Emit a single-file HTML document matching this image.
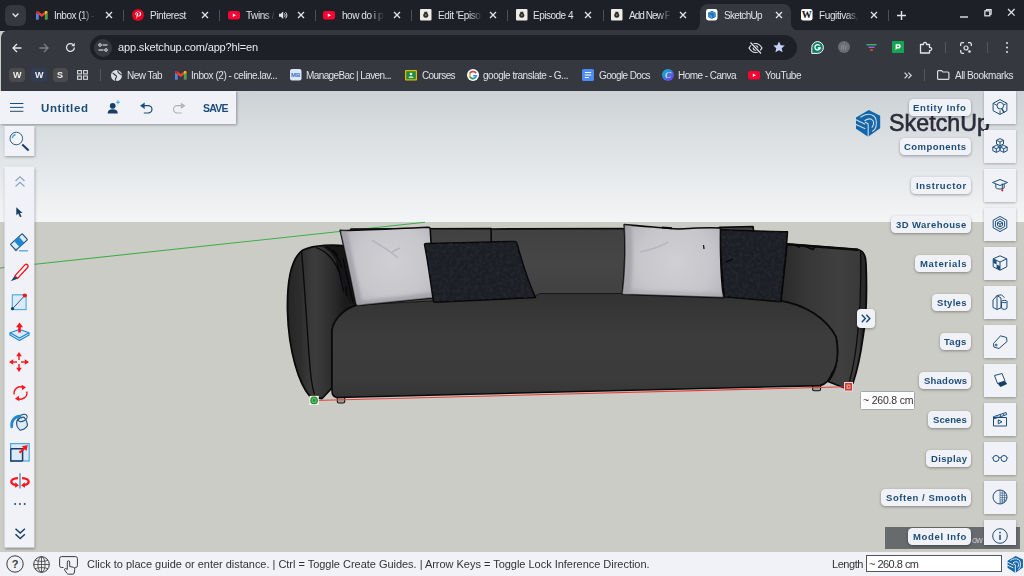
<!DOCTYPE html>
<html><head><meta charset="utf-8">
<style>
*{box-sizing:border-box;margin:0;padding:0}
html,body{width:1024px;height:576px;overflow:hidden;background:#cbccc6;font-family:"Liberation Sans",sans-serif;}
.abs{position:absolute}
#root{position:relative;width:1024px;height:576px;overflow:hidden}
.t{position:absolute;white-space:pre;font-family:"Liberation Sans",sans-serif;will-change:transform}
svg{position:absolute;overflow:visible}
#tabstrip{left:0;top:0;width:1024px;height:31px;background:#1e2028}
#toolbar{left:1px;top:30px;width:1023px;height:61px;background:#363840;border-radius:8px 0 0 0}
#omni{left:90px;top:34.5px;width:707px;height:25.5px;border-radius:13px;background:#1e2028}
#acttab{left:700px;top:4.300px;width:91px;height:27px;background:#363840;border-radius:8px 8px 0 0}
.tsep{position:absolute;top:9.5px;width:1px;height:11px;background:#4d4f58}
.fav{position:absolute;top:9.5px;width:11.5px;height:11.5px}
#sky{left:0;top:90.5px;width:1024px;height:132px;background:linear-gradient(#ccd2d5 0%,#dde1e3 40%,#f4f5f7 100%)}
#ground{left:0;top:222px;width:1024px;height:326px;background:#cbccc6}
.panel{position:absolute;background:#f1f2f7;box-shadow:.5px 1px 2.5px rgba(0,0,0,.32)}
.lbl{position:absolute;height:16px;border-radius:4.5px;background:#f1f2f7;box-shadow:0 1px 3px rgba(0,0,0,.35)}
.ibox{position:absolute;left:983.7px;width:32.8px;height:33px;background:#f1f2f7;box-shadow:0 1px 2.5px rgba(0,0,0,.28)}
#status{left:0;top:548px;width:1024px;height:28px;background:#f1f2f7}
</style></head><body><div id="root">
<div class="abs" id="sky"></div>
<div class="abs" id="ground"></div>
<svg class="abs" id="scene" style="left:0;top:90px" width="1024" height="458" viewBox="0 90 1024 458">
<defs>
<linearGradient id="gSeat" x1="0" y1="293" x2="0" y2="396" gradientUnits="userSpaceOnUse">
<stop offset="0" stop-color="#323232"/><stop offset=".2" stop-color="#373737"/><stop offset=".42" stop-color="#3c3c3c"/><stop offset=".85" stop-color="#3b3b3b"/><stop offset="1" stop-color="#353535"/>
</linearGradient>
<linearGradient id="gBack" x1="0" y1="228" x2="0" y2="300" gradientUnits="userSpaceOnUse">
<stop offset="0" stop-color="#414141"/><stop offset=".5" stop-color="#464646"/><stop offset="1" stop-color="#404040"/>
</linearGradient>
<linearGradient id="gArmL" x1="287" y1="0" x2="345" y2="0" gradientUnits="userSpaceOnUse">
<stop offset="0" stop-color="#252525"/><stop offset=".25" stop-color="#2e2e2e"/><stop offset=".34" stop-color="#353535"/><stop offset=".46" stop-color="#3c3c3c"/><stop offset=".62" stop-color="#363636"/><stop offset=".8" stop-color="#2b2b2b"/><stop offset="1" stop-color="#1b1b1b"/>
</linearGradient>
<linearGradient id="gArmR" x1="786" y1="0" x2="867" y2="0" gradientUnits="userSpaceOnUse">
<stop offset="0" stop-color="#2c2c2c"/><stop offset=".25" stop-color="#373737"/><stop offset=".65" stop-color="#3f3f3f"/><stop offset=".9" stop-color="#3a3a3a"/><stop offset=".93" stop-color="#2b2b2b"/><stop offset="1" stop-color="#262626"/>
</linearGradient>
<radialGradient id="gPW" cx="392" cy="262" r="60" gradientUnits="userSpaceOnUse"><stop offset="0" stop-color="#cfcfd4"/><stop offset=".6" stop-color="#c6c6cb"/><stop offset="1" stop-color="#b3b3b9"/></radialGradient>
<radialGradient id="gPW2" cx="675" cy="262" r="62" gradientUnits="userSpaceOnUse"><stop offset="0" stop-color="#cfcfd4"/><stop offset=".6" stop-color="#c6c6cb"/><stop offset="1" stop-color="#b3b3b9"/></radialGradient>
<filter id="bl" x="-20%" y="-20%" width="140%" height="140%"><feGaussianBlur stdDeviation="1.6"/></filter><filter id="bl2" x="-20%" y="-20%" width="140%" height="140%"><feGaussianBlur stdDeviation=".7"/></filter>
<clipPath id="cpL"><path d="M340.200 230.400 C355 230.800 385 229 428.800 227.200 Q430.200 227.300 430.200 229 C431.500 250 433.200 280 435.200 297.500 L358 305.400 Q356.400 305.400 356 303.500 C352 285 346 255 340.200 230.400 Z"/></clipPath><clipPath id="cpR"><path d="M624.200 224.600 C650 226.500 670 229 680 229 C695 228 710 227.500 719.800 228 Q720.500 228.200 720.500 230 C720.300 250 721 280 723.600 297.600 L622.300 294.200 C625 270 625.500 245 624.200 224.600Z"/></clipPath>
<filter id="noise" x="0" y="0" width="100%" height="100%" color-interpolation-filters="sRGB"><feTurbulence type="fractalNoise" baseFrequency=".28" numOctaves="3" seed="4" result="n"/><feColorMatrix in="n" type="matrix" values="0 0 0 0 .20  0 0 0 0 .22  0 0 0 0 .27  0 0 0 .9 -.33" result="c"/><feComposite in="c" in2="SourceGraphic" operator="in"/></filter>
</defs>
<!-- axis -->
<line x1="0" y1="268" x2="425" y2="222.3" stroke="#3fae49" stroke-width="1.1"/>
<!-- back cushions -->
<path d="M345 246 L351 229 L491 228.5 L491.5 229 L622 228.5 L625 229.500 L716 229.500 L720 227.300 L753 226.500 L754 234 L782 302 L357 306 Z" fill="url(#gBack)" stroke="#0a0a0a" stroke-width="1.700" stroke-linejoin="round"/>
<path d="M491 228.5 L491.3 243" stroke="#0a0a0a" stroke-width="1.6"/>
<!-- left arm -->
<path d="M310 396.500 C299 384 288.500 352 287.500 310 C287 280 291 258 303 250 C315 244.500 335 244.500 345 246 L357 305 C345 308 335 318 332 330 L332 388 L322 398.500 Z" fill="url(#gArmL)" stroke="#0a0a0a" stroke-width="1.800" stroke-linejoin="round"/>
<path d="M301.500 250.500 C305 290 307 330 309.500 361 C310.500 376 312.500 388 314.400 394.500" fill="none" stroke="#0a0a0a" stroke-width="1.3"/>
<path d="M322 246.500 C330 250 336 258 339 268 C343 282 346 294 350 303 L357 305 L345 246 Z" fill="#121212" filter="url(#bl2)"/>
<path d="M316 247.500 C326 251 334 259 339 272 M326 246.500 C334 251 339 258 342 268 M333 250 L338 256 M337 262 C340 275 342 285 344 292 M346 286 L346.500 296 M343 258 C346 272 349 286 353 302" fill="none" stroke="#070707" stroke-width="1.300"/>
<!-- right arm -->
<path d="M787 244 L858 249.5 C864 251 866 256 866 264 C867 290 866 320 863 337 C861 352 858 368 853 383 L846 388.500 L828 381.500 C838 370 839 350 836 337 C826 318 805 305 781 301 Z" fill="url(#gArmR)" stroke="#0a0a0a" stroke-width="1.800" stroke-linejoin="round"/>
<path d="M860.500 251 C861.500 280 860 310 858 330 C856.500 348 854 365 849.500 381.500" fill="none" stroke="#0a0a0a" stroke-width="1.2"/>
<path d="M787 244.300 L858 249.800" fill="none" stroke="#0a0a0a" stroke-width="2.200"/><path d="M803 245.500 L813 249.500 L815 246.500 M796 245.500 L800 247.500" fill="none" stroke="#0a0a0a" stroke-width="1.500"/>
<!-- legs -->
<rect x="337.300" y="395" width="7.400" height="8" rx="1.500" fill="#9d9e9a" stroke="#111" stroke-width="1.100"/>
<rect x="812.600" y="383" width="8" height="7.800" rx="1.500" fill="#9d9e9a" stroke="#111" stroke-width="1.100"/>
<!-- seat -->
<path d="M332 330 C334 318 345 309 357 305 L433 301 L535 296 L540 293.500 L622 293.500 L723 296.500 L781 301 C805 305 826 318 836 337 C838.500 350 838 366 832 373 C830 379 826 384.400 820 385.600 L337 397.500 C333.500 397 332 395 332 391 Z" fill="url(#gSeat)"/>
<path d="M357 305 L433 301 L535 296 L540 293.500 L622 293.500 L723 296.500 L781 301" fill="none" stroke="#1a1a1a" stroke-width="1"/>
<path d="M357 305 C345 309 334 318 332 330 L332 391 C332 395 333.500 397 337 397.500 L820 385.600 C826 384.400 830 379 832 373 C838 366 838.500 350 836 337 C826 318 805 305 781 301" fill="none" stroke="#0a0a0a" stroke-width="1.600" stroke-linejoin="round"/>
<!-- pillows -->
<path d="M340.200 230.400 C355 230.800 385 229 428.800 227.200 Q430.200 227.300 430.200 229 C431.500 250 433.200 280 435.200 297.500 L358 305.400 Q356.400 305.400 356 303.500 C352 285 346 255 340.200 230.400 Z" fill="url(#gPW)" stroke="#0a0a0a" stroke-width="1.600" stroke-linejoin="round"/>
<g clip-path="url(#cpL)"><path d="M339 230 C346 257 351 284 355 306 L363 305 C358 284 352 255 347 230 Z" fill="#9a9aa0" opacity=".7" filter="url(#bl)"/>
<path d="M372 240 C380 246 390 250 398 258 M392 252 L400 248" fill="none" stroke="#b6b6bc" stroke-width="1.600" filter="url(#bl2)"/>
<path d="M357 306.500 L436 299 L436 292 C410 295 385 298 356 301 Z" fill="#9a9aa0" opacity=".7" filter="url(#bl)"/></g>
<path d="M424.500 244.300 Q425 243.400 427 243.500 C455 243 490 242 514.500 241.400 Q516.300 241.400 516.800 243 C522 262 528 282 535.600 297.500 L435 302.200 Q433.500 302.200 433.300 300.500 C431 285 428 262 424.500 244.300Z" fill="#1c1e23" stroke="#070707" stroke-width="1.500" stroke-linejoin="round"/>
<path d="M719.200 229.600 C740 231 765 231 787.500 231.700 C786 255 783 280 780.500 301.800 L724.300 296.800 C722 275 720.500 250 719.200 229.600Z" fill="#1c1e23" stroke="#070707" stroke-width="1.500" stroke-linejoin="round"/>
<path d="M424.500 244.300 Q425 243.400 427 243.500 C455 243 490 242 514.500 241.400 Q516.300 241.400 516.800 243 C522 262 528 282 535.600 297.500 L435 302.200 Q433.500 302.200 433.300 300.500 C431 285 428 262 424.500 244.300Z" fill="#000" filter="url(#noise)"/><path d="M719.200 229.600 C740 231 765 231 787.500 231.700 C786 255 783 280 780.500 301.800 L724.300 296.800 C722 275 720.500 250 719.200 229.600Z" fill="#000" filter="url(#noise)"/>
<path d="M726 262 L733 259" stroke="#050505" stroke-width="1.300"/>
<path d="M624.200 224.600 C650 226.500 670 229 680 229 C695 228 710 227.500 719.800 228 Q720.500 228.200 720.500 230 C720.300 250 721 280 723.600 297.600 L622.300 294.200 C625 270 625.500 245 624.200 224.600Z" fill="url(#gPW2)" stroke="#0a0a0a" stroke-width="1.600" stroke-linejoin="round"/>
<g clip-path="url(#cpR)"><path d="M623 224 C625 250 625 272 621 295 L630 295 C633 270 633 248 631 225 Z" fill="#9a9aa0" opacity=".65" filter="url(#bl)"/><path d="M622 296 L724 299.500 L724 293 L622 289.500Z" fill="#a0a0a6" opacity=".5" filter="url(#bl)"/>
<path d="M640 252 C650 250 660 247 668 242" fill="none" stroke="#b8b8be" stroke-width="1.600" filter="url(#bl2)"/></g>
<path d="M703.500 245 L704 249" stroke="#111" stroke-width="1.300"/><path d="M662 227.600 L672 228.300" stroke="#0a0a0a" stroke-width="2"/>
<!-- guide -->
<line x1="314" y1="400.500" x2="846" y2="386.800" stroke="#e8403c" stroke-width="1.100"/>
<rect x="309.400" y="395.900" width="9.400" height="9" fill="#f4f6f4"/>
<circle cx="314.100" cy="400.400" r="3.200" fill="#55c463" stroke="#2c8a38" stroke-width="1.300"/><circle cx="314.100" cy="400.400" r="1.300" fill="#2c8a38"/>
<rect x="844" y="382" width="9" height="9.500" fill="#ecd6d3"/>
<rect x="845" y="383" width="7" height="7.500" fill="#c0403d"/>
<rect x="846.500" y="384.500" width="4" height="4.500" fill="#ef8f7f"/><rect x="848" y="386" width="1.500" height="1.500" fill="#c0403d"/>
</svg>
<div class="abs" id="tabstrip"></div>
<div class="abs" id="toolbar"></div>
<div class="abs" id="omni"></div>
<div class="abs" id="acttab"></div>
<div class="abs" style="left:4.5px;top:4.5px;width:21px;height:21px;border-radius:6px;background:#363840"></div>
<svg style="left:11.5px;top:13px" width="7" height="4.5" viewBox="0 0 7 4.5"><path d="M.6.6L3.500 3.500L6.400.6" fill="none" stroke="#e3e5ea" stroke-width="1.4"/></svg>
<svg style="left:36.3px;top:11px" width="11.5" height="8.5" viewBox="0 0 11.5 8.5"><path d="M0 1.2V8.5H2.6V3.6L5.75 6L8.9 3.6V8.5H11.5V1.2C11.5 0 10.2-.4 9.3.3L5.75 3L2.2.3C1.3-.4 0 0 0 1.2Z" fill="#ea4335"/><path d="M0 1.2V8.5H2.6V3.6L0 1.6Z" fill="#4285f4"/><path d="M11.5 1.2V8.5H8.9V3.6L11.5 1.6Z" fill="#34a853"/><path d="M8.9 3.6V.6L9.3.3C10.2-.4 11.5 0 11.5 1.2V1.6Z" fill="#fbbc04"/><path d="M2.6 3.6V.6L2.2.3C1.3-.4 0 0 0 1.2V1.6Z" fill="#c5221f"/></svg>
<span class="t" style="left:54.0px;top:8.65px;font-size:10px;line-height:14px;color:#dfe1e6;font-weight:400;letter-spacing:-0.507px;-webkit-mask-image:linear-gradient(90deg,#000 70%,rgba(0,0,0,.1) 100%);">Inbox (1) -</span>
<svg style="left:106.3px;top:12.2px" width="6" height="6" viewBox="0 0 6 6"><path d="M0 0L6 6 M6 0L0 6" stroke="#e3e5ea" stroke-width="1.3"/></svg>
<svg style="left:132px;top:9.2px" width="12" height="12" viewBox="0 0 12 12"><circle cx="6" cy="6" r="6" fill="#e60023"/><path d="M6.2 2.6C4.4 2.6 3.4 3.8 3.4 5.1c0 .7.3 1.3.9 1.5.1 0 .2 0 .2-.1l.1-.4c0-.1 0-.2-.1-.3-.2-.2-.3-.5-.3-.9 0-1 .8-1.9 2-1.9 1.100 0 1.700.7 1.700 1.600 0 1.200-.5 2.200-1.300 2.200-.4 0-.8-.4-.7-.8.1-.5.4-1.100.4-1.500 0-.3-.2-.6-.6-.6-.5 0-.8.5-.8 1.100 0 .4.1.7.1.7l-.6 2.400c-.1.500 0 1.200 0 1.400h.2c.1-.2.600-.8.800-1.400l.3-1.200c.2.300.6.500 1.100.500 1.400 0 2.400-1.300 2.400-3C9.300 3.700 8.100 2.600 6.200 2.600Z" fill="#fff"/></svg>
<span class="t" style="left:150.0px;top:8.65px;font-size:10px;line-height:14px;color:#dfe1e6;font-weight:400;letter-spacing:-0.385px;">Pinterest</span>
<svg style="left:202.3px;top:12.2px" width="6" height="6" viewBox="0 0 6 6"><path d="M0 0L6 6 M6 0L0 6" stroke="#e3e5ea" stroke-width="1.3"/></svg>
<svg style="left:228px;top:11px" width="12" height="8.5" viewBox="0 0 12 8.5"><rect width="12" height="8.5" rx="2.2" fill="#f03"/><path d="M4.8 2.4L8 4.25L4.8 6.1Z" fill="#fff"/></svg>
<span class="t" style="left:246.3px;top:8.65px;font-size:10px;line-height:14px;color:#dfe1e6;font-weight:400;letter-spacing:-0.446px;-webkit-mask-image:linear-gradient(90deg,#000 70%,rgba(0,0,0,.1) 100%);">Twins /</span>
<svg style="left:298.3px;top:12.2px" width="6" height="6" viewBox="0 0 6 6"><path d="M0 0L6 6 M6 0L0 6" stroke="#e3e5ea" stroke-width="1.3"/></svg>
<svg style="left:323px;top:11px" width="12" height="8.5" viewBox="0 0 12 8.5"><rect width="12" height="8.5" rx="2.2" fill="#f03"/><path d="M4.8 2.4L8 4.25L4.8 6.1Z" fill="#fff"/></svg>
<span class="t" style="left:342.0px;top:8.65px;font-size:10px;line-height:14px;color:#dfe1e6;font-weight:400;letter-spacing:-0.459px;-webkit-mask-image:linear-gradient(90deg,#000 70%,rgba(0,0,0,.1) 100%);">how do i p</span>
<svg style="left:394.3px;top:12.2px" width="6" height="6" viewBox="0 0 6 6"><path d="M0 0L6 6 M6 0L0 6" stroke="#e3e5ea" stroke-width="1.3"/></svg>
<svg style="left:420px;top:9.3px" width="11.5" height="11.5" viewBox="0 0 11.5 11.5"><rect width="11.5" height="11.5" rx="1" fill="#efece6"/><circle cx="5.75" cy="6.2" r="2.5" fill="#2a2a2a"/><circle cx="5.75" cy="6" r="1" fill="#777"/><rect x="4.3" y="2.8" width="3" height="1.5" fill="#2a2a2a"/></svg>
<span class="t" style="left:438.0px;top:8.65px;font-size:10px;line-height:14px;color:#dfe1e6;font-weight:400;letter-spacing:-0.403px;-webkit-mask-image:linear-gradient(90deg,#000 70%,rgba(0,0,0,.1) 100%);">Edit 'Episo</span>
<svg style="left:490.3px;top:12.2px" width="6" height="6" viewBox="0 0 6 6"><path d="M0 0L6 6 M6 0L0 6" stroke="#e3e5ea" stroke-width="1.3"/></svg>
<svg style="left:516px;top:9.3px" width="11.5" height="11.5" viewBox="0 0 11.5 11.5"><rect width="11.5" height="11.5" rx="1" fill="#efece6"/><circle cx="5.75" cy="6.2" r="2.5" fill="#2a2a2a"/><circle cx="5.75" cy="6" r="1" fill="#777"/><rect x="4.3" y="2.8" width="3" height="1.5" fill="#2a2a2a"/></svg>
<span class="t" style="left:533.0px;top:8.65px;font-size:10px;line-height:14px;color:#dfe1e6;font-weight:400;letter-spacing:-0.498px;">Episode 4</span>
<svg style="left:585.3px;top:12.2px" width="6" height="6" viewBox="0 0 6 6"><path d="M0 0L6 6 M6 0L0 6" stroke="#e3e5ea" stroke-width="1.3"/></svg>
<svg style="left:611px;top:9.3px" width="11.5" height="11.5" viewBox="0 0 11.5 11.5"><rect width="11.5" height="11.5" rx="1" fill="#efece6"/><circle cx="5.75" cy="6.2" r="2.5" fill="#2a2a2a"/><circle cx="5.75" cy="6" r="1" fill="#777"/><rect x="4.3" y="2.8" width="3" height="1.5" fill="#2a2a2a"/></svg>
<span class="t" style="left:629.0px;top:8.65px;font-size:10px;line-height:14px;color:#dfe1e6;font-weight:400;letter-spacing:-0.941px;-webkit-mask-image:linear-gradient(90deg,#000 70%,rgba(0,0,0,.1) 100%);">Add New F</span>
<svg style="left:680.3px;top:12.2px" width="6" height="6" viewBox="0 0 6 6"><path d="M0 0L6 6 M6 0L0 6" stroke="#e3e5ea" stroke-width="1.3"/></svg>
<svg style="left:706px;top:9.3px" width="11.5" height="11.5" viewBox="0 0 11.5 11.5"><rect width="11.5" height="11.5" rx="2.4" fill="#fff"/><path d="M6 1.700L9.700 3.700V7.900L5.700 10L2 7.900V3.800Z" fill="#1b72b8"/><path d="M3.300 4.300C4.800 3.200 6.800 3 8 4C8.800 5 8.700 6.500 7.800 7.800M2 5.200L5.600 7M2 6.800L5.600 8.500M5.700 6.500V10" fill="none" stroke="#7db9e8" stroke-width=".6"/></svg>
<span class="t" style="left:724.0px;top:8.65px;font-size:10px;line-height:14px;color:#dfe1e6;font-weight:400;letter-spacing:-0.670px;">SketchUp</span>
<svg style="left:776.3px;top:12.2px" width="6" height="6" viewBox="0 0 6 6"><path d="M0 0L6 6 M6 0L0 6" stroke="#e3e5ea" stroke-width="1.3"/></svg>
<svg style="left:801px;top:9.3px" width="11.5" height="11.5" viewBox="0 0 11.5 11.5"><rect width="11.5" height="11.5" rx="2.2" fill="#fff"/><text x="5.75" y="9.300" font-family="Liberation Serif" font-size="10" font-weight="700" text-anchor="middle" fill="#111" textLength="10" lengthAdjust="spacingAndGlyphs">W</text></svg>
<span class="t" style="left:819.0px;top:8.65px;font-size:10px;line-height:14px;color:#dfe1e6;font-weight:400;letter-spacing:-0.380px;-webkit-mask-image:linear-gradient(90deg,#000 70%,rgba(0,0,0,.1) 100%);">Fugitivas,</span>
<svg style="left:871.3px;top:12.2px" width="6" height="6" viewBox="0 0 6 6"><path d="M0 0L6 6 M6 0L0 6" stroke="#e3e5ea" stroke-width="1.3"/></svg>
<svg style="left:278.5px;top:11px" width="9" height="8.5" viewBox="0 0 9 8.5"><path d="M0 2.800H1.800L4.200.6V7.900L1.800 5.700H0Z" fill="#e3e5ea"/><path d="M5.400 2.400C6.300 3.300 6.300 5.200 5.400 6.100M6.600 1.200C8.300 2.900 8.300 5.600 6.600 7.300" fill="none" stroke="#e3e5ea" stroke-width="1"/></svg>
<div class="tsep" style="left:123.3px"></div>
<div class="tsep" style="left:219.3px"></div>
<div class="tsep" style="left:315.2px"></div>
<div class="tsep" style="left:411px"></div>
<div class="tsep" style="left:507px"></div>
<div class="tsep" style="left:602.5px"></div>
<div class="tsep" style="left:888.3px"></div>
<svg style="left:692px;top:23px" width="8" height="8" viewBox="0 0 8 8"><path d="M8 8H0C4.400 8 8 4.400 8 0Z" fill="#363840"/></svg>
<svg style="left:791px;top:23px" width="8" height="8" viewBox="0 0 8 8"><path d="M0 8H8C3.600 8 0 4.400 0 0Z" fill="#363840"/></svg>
<svg style="left:897px;top:11px" width="9" height="9" viewBox="0 0 9 9"><path d="M4.500 0V9M0 4.500H9" stroke="#e3e5ea" stroke-width="1.400"/></svg>
<svg style="left:960px;top:15.5px" width="8" height="2" viewBox="0 0 8 2"><path d="M0 1H8" stroke="#e3e5ea" stroke-width="1.4"/></svg>
<svg style="left:984px;top:9.2px" width="8" height="7.4" viewBox="0 0 9 9"><rect x=".7" y="2.300" width="6" height="6" fill="none" stroke="#e3e5ea" stroke-width="1.500"/><path d="M2.700 2.300V.7H8.300V6.300H6.700" fill="none" stroke="#e3e5ea" stroke-width="1.500"/></svg>
<svg style="left:1008.2px;top:9.2px" width="6.6" height="6.6" viewBox="0 0 6.6 6.6"><path d="M0 0L6.6 6.6 M6.6 0L0 6.6" stroke="#e3e5ea" stroke-width="1.3"/></svg>
<svg style="left:11.5px;top:42.5px" width="10" height="10" viewBox="0 0 10 10"><path d="M9.500 5H1.200M5 1L1 5L5 9" fill="none" stroke="#e3e5ea" stroke-width="1.300"/></svg>
<svg style="left:38.5px;top:42.5px" width="10" height="10" viewBox="0 0 10 10"><path d="M.5 5H8.800M5 1L9 5L5 9" fill="none" stroke="#7c7e86" stroke-width="1.300"/></svg>
<svg style="left:65px;top:42px" width="11" height="11" viewBox="0 0 11 11"><path d="M9.300 5.500A3.900 3.900 0 1 1 8 2.600" fill="none" stroke="#e3e5ea" stroke-width="1.300"/><path d="M9.700.8V4.200H6.300Z" fill="#e3e5ea"/></svg>
<div class="abs" style="left:93.5px;top:38.5px;width:18px;height:18px;border-radius:9px;background:#363840"></div>
<svg style="left:97.5px;top:43px" width="10" height="9" viewBox="0 0 10 9"><circle cx="2" cy="2" r="1.300" fill="none" stroke="#e3e5ea" stroke-width="1"/><path d="M4.500 2H9.500" stroke="#e3e5ea" stroke-width="1.100"/><circle cx="8" cy="7" r="1.300" fill="none" stroke="#e3e5ea" stroke-width="1"/><path d="M.5 7H5.500" stroke="#e3e5ea" stroke-width="1.100"/></svg>
<span class="t" style="left:117.5px;top:39.60px;font-size:11px;line-height:15px;color:#e8eaef;font-weight:400;letter-spacing:-0.155px;">app.sketchup.com/app?hl=en</span>
<svg style="left:748px;top:41.5px" width="15" height="12" viewBox="0 0 15 12"><path d="M1 6C3 2.600 5.300 1.500 7.500 1.500C9.700 1.500 12 2.600 14 6C12 9.400 9.700 10.500 7.500 10.500C5.300 10.500 3 9.400 1 6Z" fill="none" stroke="#e3e5ea" stroke-width="1.200"/><circle cx="7.500" cy="6" r="2.200" fill="none" stroke="#e3e5ea" stroke-width="1.200"/><path d="M2.500 0.500L13 11.500" stroke="#1e2028" stroke-width="3"/><path d="M2.500 0.500L13 11.500" stroke="#e3e5ea" stroke-width="1.200"/></svg>
<svg style="left:773px;top:41px" width="12" height="12" viewBox="0 0 12 12"><path d="M6 .5L7.700 4.200L11.700 4.600L8.700 7.300L9.600 11.300L6 9.200L2.400 11.300L3.300 7.300L.3 4.600L4.300 4.200Z" fill="#c3d3f7"/></svg>
<svg style="left:811px;top:40.8px" width="13" height="13" viewBox="0 0 13 13"><path d="M6.500 .6A5.900 5.900 0 1 1 6.500 12.400H.8V6.500A5.900 5.900 0 0 1 6.500 .6Z" fill="#0f7f68" stroke="#fff" stroke-width="1"/><path d="M8.800 4.700A2.700 2.700 0 1 0 9.200 7H6.700" fill="none" stroke="#fff" stroke-width="1.300"/></svg>
<svg style="left:838px;top:41px" width="12" height="12" viewBox="0 0 12 12"><circle cx="6" cy="6" r="6" fill="#6b6d73"/><path d="M3.200 8.500L4.300 4M5.500 8.500L6 3.500M7.500 8.500L8.300 4.500" fill="none" stroke="#8f9197" stroke-width="1"/></svg>
<svg style="left:866px;top:43.5px" width="11" height="7.5" viewBox="0 0 11 7.5"><path d="M.5 .7H10.500" stroke="#2eb67d" stroke-width="1.400"/><path d="M2.500 3.300H8.500" stroke="#a45fd6" stroke-width="1.400"/><path d="M4.200 6H6.800" stroke="#f0442d" stroke-width="1.700"/></svg>
<svg style="left:892px;top:41px" width="12" height="12" viewBox="0 0 12 12"><rect width="12" height="12" rx=".8" fill="#14a552"/><path d="M3.600 3.200H7.200Q8.600 3.200 8.600 4.600V6Q8.600 7.400 7.200 7.400H5.200L3.600 9.200Z" fill="#fff"/><rect x="5.200" y="4.600" width="1.800" height="1.400" fill="#14a552"/></svg>
<svg style="left:919px;top:41px" width="13" height="13" viewBox="0 0 13 13"><path d="M1.500 3.500H4.500A1.600 1.600 0 1 1 7.500 3.500H10.500V6.500A1.600 1.600 0 1 1 10.500 9.500V12H1.500Z" fill="none" stroke="#e3e5ea" stroke-width="1.300" stroke-linejoin="round"/></svg>
<div class="abs" style="left:945px;top:41.500px;width:1px;height:11px;background:#54565e"></div>
<svg style="left:959.5px;top:41.5px" width="12" height="12" viewBox="0 0 12 12"><path d="M.7 4V2.200Q.7.700 2.200.700H4M8 .7H9.800Q11.300.700 11.300 2.200V4M.7 8V9.800Q.7 11.300 2.200 11.300H4" fill="none" stroke="#e3e5ea" stroke-width="1.300"/><circle cx="6" cy="6" r="2" fill="none" stroke="#e3e5ea" stroke-width="1.200"/><circle cx="9.500" cy="9.500" r="1.300" fill="#e3e5ea"/></svg>
<div class="abs" style="left:987px;top:41.500px;width:1px;height:11px;background:#54565e"></div>
<svg style="left:1006px;top:42px" width="2" height="11" viewBox="0 0 2 11"><circle cx="1" cy="1" r="1" fill="#e3e5ea"/><circle cx="1" cy="5.500" r="1" fill="#e3e5ea"/><circle cx="1" cy="10" r="1" fill="#e3e5ea"/></svg>
<div class="abs" style="left:9.3px;top:67.800px;width:15.500px;height:14.500px;border-radius:4px;background:#4b4b4e"></div>
<span class="t" style="left:12.9px;top:68.60px;font-size:9px;line-height:13px;color:#f0f0f0;font-weight:700;letter-spacing:0.000px;">W</span>
<div class="abs" style="left:31px;top:67.800px;width:15.500px;height:14.500px;border-radius:4px;background:#323d55"></div>
<span class="t" style="left:34.6px;top:68.60px;font-size:9px;line-height:13px;color:#f0f0f0;font-weight:700;letter-spacing:0.000px;">W</span>
<div class="abs" style="left:52.5px;top:67.800px;width:15.500px;height:14.500px;border-radius:4px;background:#4b4b4e"></div>
<span class="t" style="left:57.1px;top:68.60px;font-size:9px;line-height:13px;color:#f0f0f0;font-weight:700;letter-spacing:0.000px;">S</span>
<svg style="left:77px;top:70px" width="11" height="10" viewBox="0 0 11 10"><rect x=".6" y=".6" width="3.800" height="3.300" fill="none" stroke="#d8dae0" stroke-width="1.100"/><rect x="6.600" y=".6" width="3.800" height="3.300" fill="none" stroke="#d8dae0" stroke-width="1.100"/><rect x=".6" y="6" width="3.800" height="3.300" fill="none" stroke="#d8dae0" stroke-width="1.100"/><rect x="6.600" y="6" width="3.800" height="3.300" fill="none" stroke="#d8dae0" stroke-width="1.100"/></svg>
<div class="abs" style="left:99.500px;top:69px;width:1px;height:12px;background:#54565e"></div>
<svg style="left:111px;top:69.5px" width="11" height="11" viewBox="0 0 11 11"><circle cx="5.500" cy="5.500" r="5.500" fill="#dcdee3"/><path d="M1.500 3C3 3.500 3.500 5 5 5.500C6 6 5.500 7.500 4.500 8.500C4 9.500 4.500 10.300 5 10.800M7 .5C6.500 2 7.500 3 8.500 3.500C9.500 4 10 5 10.800 5.200" fill="none" stroke="#363840" stroke-width="1.100"/></svg>
<span class="t" style="left:127.0px;top:68.70px;font-size:10px;line-height:14px;color:#dfe1e6;font-weight:400;letter-spacing:-0.533px;">New Tab</span>
<svg style="left:175px;top:70.5px" width="11.5" height="8.5" viewBox="0 0 11.5 8.5"><path d="M0 1.2V8.5H2.6V3.6L5.75 6L8.9 3.6V8.5H11.5V1.2C11.5 0 10.2-.4 9.3.3L5.75 3L2.2.3C1.3-.4 0 0 0 1.2Z" fill="#ea4335"/><path d="M0 1.2V8.5H2.6V3.6L0 1.6Z" fill="#4285f4"/><path d="M11.5 1.2V8.5H8.9V3.6L11.5 1.6Z" fill="#34a853"/><path d="M8.9 3.6V.6L9.3.3C10.2-.4 11.5 0 11.5 1.2V1.6Z" fill="#fbbc04"/><path d="M2.6 3.6V.6L2.2.3C1.3-.4 0 0 0 1.2V1.6Z" fill="#c5221f"/></svg>
<span class="t" style="left:191.0px;top:68.70px;font-size:10px;line-height:14px;color:#dfe1e6;font-weight:400;letter-spacing:-0.466px;">Inbox (2) - celine.lav...</span>
<svg style="left:290px;top:69.3px" width="11.5" height="11.5" viewBox="0 0 11.5 11.5"><rect width="11.500" height="11.500" rx="2" fill="#dbe7f8"/><text x="5.750" y="8.300" font-family="Liberation Sans" font-weight="700" font-size="6" text-anchor="middle" fill="#3b6fc4">MB</text></svg>
<span class="t" style="left:306.0px;top:68.70px;font-size:10px;line-height:14px;color:#dfe1e6;font-weight:400;letter-spacing:-0.605px;">ManageBac | Laven...</span>
<svg style="left:405px;top:70px" width="12" height="10.5" viewBox="0 0 12 10.5"><rect width="12" height="10.500" rx="1" fill="#f4b400"/><rect x="1.200" y="1.200" width="9.600" height="8.100" fill="#1e8e3e"/><circle cx="6" cy="4" r="1.300" fill="#fff"/><path d="M3.500 7.800C3.500 6 8.500 6 8.500 7.800Z" fill="#fff"/></svg>
<span class="t" style="left:422.0px;top:68.70px;font-size:10px;line-height:14px;color:#dfe1e6;font-weight:400;letter-spacing:-0.607px;">Courses</span>
<svg style="left:467px;top:69px" width="12" height="12" viewBox="0 0 12 12"><circle cx="6" cy="6" r="6" fill="#fff"/><path d="M9 4.200A3.500 3.500 0 1 0 9.400 6.800H6.200" fill="none" stroke="#4285f4" stroke-width="1.500"/><path d="M3 4.300A3.500 3.500 0 0 1 9 4.200" fill="none" stroke="#ea4335" stroke-width="1.500"/><path d="M3 4.300A3.500 3.500 0 0 0 3.200 8" fill="none" stroke="#fbbc04" stroke-width="1.500"/><path d="M3.200 8A3.500 3.500 0 0 0 8 8.800" fill="none" stroke="#34a853" stroke-width="1.500"/></svg>
<span class="t" style="left:483.0px;top:68.70px;font-size:10px;line-height:14px;color:#dfe1e6;font-weight:400;letter-spacing:-0.486px;">google translate - G...</span>
<svg style="left:582px;top:69px" width="12" height="12" viewBox="0 0 12 12"><rect width="12" height="12" rx="1.500" fill="#4d8bf5"/><path d="M2.800 3.500H9.200M2.800 6H9.200M2.800 8.500H7" stroke="#fff" stroke-width="1.200"/></svg>
<span class="t" style="left:599.0px;top:68.70px;font-size:10px;line-height:14px;color:#dfe1e6;font-weight:400;letter-spacing:-0.619px;">Google Docs</span>
<svg style="left:662px;top:69px" width="12" height="12" viewBox="0 0 12 12"><defs><linearGradient id="cv" x1="0" y1="0" x2="1" y2="1"><stop offset="0" stop-color="#00c4cc"/><stop offset="1" stop-color="#7d2ae8"/></linearGradient></defs><circle cx="6" cy="6" r="6" fill="url(#cv)"/><text x="6" y="9" font-family="Liberation Serif" font-style="italic" font-size="9" text-anchor="middle" fill="#fff">C</text></svg>
<span class="t" style="left:678.0px;top:68.70px;font-size:10px;line-height:14px;color:#dfe1e6;font-weight:400;letter-spacing:-0.539px;">Home - Canva</span>
<svg style="left:748px;top:70.8px" width="12" height="8.5" viewBox="0 0 12 8.5"><rect width="12" height="8.5" rx="2.2" fill="#f03"/><path d="M4.8 2.4L8 4.25L4.8 6.1Z" fill="#fff"/></svg>
<span class="t" style="left:765.0px;top:68.70px;font-size:10px;line-height:14px;color:#dfe1e6;font-weight:400;letter-spacing:-0.471px;">YouTube</span>
<svg style="left:903.5px;top:71.5px" width="8" height="7" viewBox="0 0 8 7"><path d="M.6.6L3.400 3.500L.6 6.400M4.400.6L7.200 3.500L4.400 6.400" fill="none" stroke="#d8dae0" stroke-width="1.200"/></svg>
<div class="abs" style="left:924px;top:69px;width:1px;height:12px;background:#54565e"></div>
<svg style="left:937px;top:70px" width="12.5" height="10" viewBox="0 0 12.5 10"><path d="M.6 1.600Q.6.600 1.600.600H4.500L5.800 2H10.900Q11.900 2 11.900 3V8.400Q11.900 9.400 10.900 9.400H1.600Q.6 9.400.6 8.400Z" fill="none" stroke="#d8dae0" stroke-width="1.200"/></svg>
<span class="t" style="left:955.0px;top:68.70px;font-size:10px;line-height:14px;color:#dfe1e6;font-weight:400;letter-spacing:-0.454px;">All Bookmarks</span>
<svg style="left:856px;top:109.5px" width="24.2" height="26.8" viewBox="0 0 24.200 26.800"><path d="M12.800 0L24.200 5.700V18.200L12.100 26.800L0 18.700V7.600Z" fill="#1266ab"/><g fill="none" stroke="#d6dbde" stroke-width="1.1"><path d="M12.200 13.800V27"/><path d="M4.500 7.200C8.500 4.300 13.500 3.300 17.500 5.800C20.800 8 20.600 12.500 20.100 16C19.700 18.800 18.500 20.300 16.300 21.500"/><path d="M8.500 10.800C11.500 8.800 15 8.300 16.900 10.500C18.200 12.500 17.600 15.200 15.800 17.800"/><path d="M-.5 9.500L9.200 14.200"/><path d="M-.5 14.300L9.200 18.800"/><path d="M12.200 13.800L9 12"/></g></svg>
<span class="t" style="left:888.5px;top:109.60px;font-size:23.2px;line-height:27.2px;color:#2c2b3b;font-weight:400;letter-spacing:0.059px;-webkit-text-stroke:.6px #2c2b3b;">SketchUp</span>
<div class="panel" style="left:0;top:90.5px;width:236px;height:33.300px"></div>
<svg style="left:9.8px;top:102.5px" width="13.4" height="9" viewBox="0 0 13.4 9"><path d="M0 .5H13.400M0 4.400H13.400M0 8.300H13.400" stroke="#1c4d7a" stroke-width="1"/></svg>
<span class="t" style="left:40.5px;top:100.60px;font-size:11.5px;line-height:15.5px;color:#1c4d7a;font-weight:700;letter-spacing:0.586px;">Untitled</span>
<svg style="left:107px;top:100px" width="14" height="14" viewBox="0 0 14 14"><circle cx="5.700" cy="5.800" r="2.900" fill="#173f66"/><path d="M.6 13.600C.6 10.600 2.300 9.200 5.700 9.200C9.100 9.200 10.800 10.600 10.800 13.600Z" fill="#173f66"/><path d="M11 .300V4.300M9 2.300H13" stroke="#4aa8e0" stroke-width="1.100"/></svg>
<svg style="left:139.8px;top:101.6px" width="12.5" height="11.5" viewBox="0 0 12.5 11.5"><path d="M0 3.700L4.700 .4V7Z" fill="#1c4d7a"/><path d="M4 3.700H8.300A3.650 3.650 0 0 1 8.300 11H3.800" fill="none" stroke="#1c4d7a" stroke-width="1.200"/></svg>
<svg style="left:172.5px;top:101.6px" width="12.5" height="11.5" viewBox="0 0 12.5 11.5"><path d="M12.500 3.700L7.800 .4V7Z" fill="#aeb3bc"/><path d="M8.500 3.700H4.200A3.650 3.650 0 0 0 4.200 11H8.700" fill="none" stroke="#aeb3bc" stroke-width="1.200"/></svg>
<span class="t" style="left:203.0px;top:100.65px;font-size:10.5px;line-height:14.5px;color:#1c4d7a;font-weight:700;letter-spacing:-0.757px;">SAVE</span>
<div class="panel" style="left:4px;top:126px;width:30px;height:30px;transform:translate(.45px,0)"></div>
<svg style="left:8px;top:130px" width="24" height="24" viewBox="0 0 24 24"><circle cx="8.300" cy="8.500" r="6.300" fill="#f4f6fb" stroke="#2f5c88" stroke-width="1"/><path d="M4.300 8.300A4.300 4.300 0 0 1 7.600 4.500" fill="none" stroke="#4aa8e0" stroke-width="1.400"/><path d="M14.300 14.600L20.600 20.400" stroke="#173f66" stroke-width="2.100"/></svg>
<div class="panel" style="left:4px;top:166px;width:30px;height:381px;transform:translate(.45px,.6px)"></div>
<svg style="left:14.8px;top:176px" width="10" height="11.5" viewBox="0 0 10 11.5"><path d="M.5 5L5 .8L9.500 5M.5 10.500L5 6.300L9.500 10.500" fill="none" stroke="#8aa3bf" stroke-width="1.200"/></svg>
<svg style="left:15.5px;top:207px" width="8" height="11" viewBox="0 0 8 11"><path d="M.3 .2V8.300L2.300 6.500L4 10.300L5.600 9.600L3.900 5.900H6.600Z" fill="#173f66"/></svg>
<svg style="left:9.5px;top:233px" width="19" height="19" viewBox="0 0 19 19"><g transform="rotate(-42 9 9)"><rect x="1" y="5" width="16" height="8" rx=".8" fill="#dbeaf8" stroke="#1c4d7a" stroke-width="1.100"/><rect x="6" y="5" width="6.500" height="8" fill="#1e88d2"/></g><path d="M9 17.800H18" stroke="#4aa8e0" stroke-width="1.300"/><circle cx="6" cy="17" r="1" fill="none" stroke="#1c4d7a" stroke-width=".6"/></svg>
<svg style="left:10px;top:263px" width="19" height="19" viewBox="0 0 19 19"><path d="M4.900 12.900L14.900 1.900A1.800 1.800 0 0 1 17.600 4.400L7.600 15.400Z" fill="#fff" stroke="#fa141c" stroke-width="1.400" stroke-linejoin="round"/><path d="M4.500 13.200L7.500 15.800L.8 18.200Z" fill="#173f66"/></svg>
<svg style="left:10px;top:292px" width="19" height="19" viewBox="0 0 19 19"><rect x="2.300" y="2.800" width="13.800" height="14.800" fill="#dbeaf8" stroke="#4aa8e0" stroke-width="1.100"/><path d="M2.500 16.800L14.800 3.500" stroke="#2f5c88" stroke-width="1"/><circle cx="2.500" cy="16.700" r="1.600" fill="#173f66"/><circle cx="14.800" cy="3.500" r="2.100" fill="#fa141c"/></svg>
<svg style="left:9px;top:322px" width="21" height="20" viewBox="0 0 21 20"><path d="M1 10.800L10.500 7.500L20 10.800V13L10.500 18.500L1 13Z" fill="#dbeaf8" stroke="#1e88d2" stroke-width="1.200" stroke-linejoin="round"/><path d="M1 10.800L10.500 16L20 10.800" fill="none" stroke="#1e88d2" stroke-width="1.200"/><path d="M10.500 .6L14 5.300H11.800V10.500H9.200V5.300H7Z" fill="#fa141c"/></svg>
<svg style="left:9.4px;top:352.2px" width="20" height="20" viewBox="0 0 20 20"><g fill="#fa141c"><path d="M10 0L12.800 4.200H7.200Z"/><path d="M10 20L12.800 15.800H7.200Z"/><path d="M0 10L4.200 7.200V12.800Z"/><path d="M20 10L15.800 7.200V12.800Z"/><rect x="9.300" y="3.500" width="1.400" height="4.500"/><rect x="9.300" y="12" width="1.400" height="4.500"/><rect x="3.500" y="9.300" width="4.500" height="1.400"/><rect x="12" y="9.300" width="4.500" height="1.400"/></g></svg>
<svg style="left:11.5px;top:384px" width="17" height="18" viewBox="0 0 17 18"><path d="M2.200 10.500A6.300 6.300 0 0 1 11.500 3.700" fill="none" stroke="#fa141c" stroke-width="1.400"/><path d="M14.800 7.500A6.300 6.300 0 0 1 5.500 14.300" fill="none" stroke="#fa141c" stroke-width="1.400"/><path d="M9.500 .8L14 3.300L10.300 6.300Z" fill="#fa141c"/><path d="M7.500 17.200L3 14.700L6.700 11.700Z" fill="#fa141c"/></svg>
<svg style="left:10px;top:413px" width="19" height="18" viewBox="0 0 19 18"><path d="M7 7.500C9 5.500 12 4 14 4.200C16 6.500 17.500 10 17.300 13C15.500 15.500 12.500 17 10 17.200C7.500 15 6 11 7 7.500Z" fill="#dbeaf8" stroke="#1c4d7a" stroke-width="1.100" stroke-linejoin="round"/><ellipse cx="12.500" cy="5" rx="5" ry="3.200" transform="rotate(-28 12.500 5)" fill="none" stroke="#1c4d7a" stroke-width="1.100"/><path d="M10 3.200C4.500 3.500 1 8 1.700 13.800" fill="none" stroke="#1e88d2" stroke-width="2.700" stroke-linecap="round"/></svg>
<svg style="left:9.5px;top:443px" width="20" height="19" viewBox="0 0 20 19"><rect x=".6" y=".6" width="18.600" height="17.400" fill="#dbeaf8" stroke="#4aa8e0" stroke-width="1.200"/><path d="M.8 5.800H12.600V18" fill="none" stroke="#173f66" stroke-width="1.500"/><path d="M.8 5.800V18H12.600" fill="none" stroke="#173f66" stroke-width="1.300"/><path d="M9.500 9.800L14.500 5.300" stroke="#fa141c" stroke-width="2.200"/><path d="M17.800 2L16.500 8L11.800 3.300Z" fill="#fa141c"/></svg>
<svg style="left:9.5px;top:473px" width="20" height="16" viewBox="0 0 20 16"><path d="M8 5.100C4 5.400 1.300 6.800 1.300 8.700C1.300 10.400 3.500 11.700 7 12.200M12 5.100C16 5.400 18.700 6.800 18.700 8.700C18.700 10.400 16.500 11.700 13 12.200" fill="none" stroke="#fa141c" stroke-width="2.300"/><path d="M9 12.400L5.300 9.200L5 14.800Z" fill="#fa141c"/><path d="M11 12.400L14.700 9.200L15 14.800Z" fill="#fa141c"/><path d="M10 .3V15.500" stroke="#2f5c88" stroke-width="1"/></svg>
<svg style="left:13.5px;top:502.5px" width="12" height="2" viewBox="0 0 12 2"><circle cx="1.100" cy="1" r="1" fill="#1c4d7a"/><circle cx="5.900" cy="1" r="1" fill="#1c4d7a"/><circle cx="10.700" cy="1" r="1" fill="#1c4d7a"/></svg>
<svg style="left:14.6px;top:527.5px" width="10.4" height="11.5" viewBox="0 0 10.4 11.5"><path d="M.5 .8L5.200 5L9.900 .8M.5 6.300L5.200 10.500L9.900 6.300" fill="none" stroke="#173f66" stroke-width="1.500"/></svg>
<div class="abs" style="left:885.300px;top:527.300px;width:134.500px;height:22px;background:#676b6d"></div>
<span class="t" style="left:972.0px;top:534.00px;font-size:9px;line-height:13px;color:#c9cccf;font-weight:400;letter-spacing:-0.758px;">ow</span>
<div class="ibox" style="top:90.5px;height:33.3px"></div>
<svg style="left:992px;top:98.7px" width="16" height="16" viewBox="0 0 16 16"><path d="M8 .6L14.900 4.300V11.700L8 15.400L1.100 11.700V4.300Z" fill="none" stroke="#1c4d7a" stroke-width="1" stroke-linejoin="round"/><path d="M1.100 4.300L5 6.300M14.900 4.300L11.500 6.100M8 15.400V11.500" stroke="#1c4d7a" stroke-width=".9"/><circle cx="8.300" cy="6.700" r="3.300" fill="#f1f2f7" stroke="#1c4d7a" stroke-width="1"/><path d="M9.900 9.700L12.200 13.800" stroke="#1c4d7a" stroke-width="1.400"/></svg>
<div class="lbl" style="left:908.8px;top:98.9px;width:62.6px;height:16.800px"></div>
<span class="t" style="left:913.4px;top:100.80px;font-size:9.5px;line-height:13.5px;color:#1c4d7a;font-weight:700;letter-spacing:0.632px;">Entity Info</span>
<div class="ibox" style="top:130.2px;height:32.5px"></div>
<svg style="left:992px;top:137.7px" width="16" height="16" viewBox="0 0 16 16"><path d="M8 .6L11.500 2.300V6L8 7.700L4.500 6V2.300ZM4.500 2.300L8 4L11.500 2.300M8 4V7.700" fill="none" stroke="#1c4d7a" stroke-width="1" stroke-linejoin="round"/><path d="M4.300 7.300L7.800 9V12.700L4.300 14.400L.8 12.700V9ZM.8 9L4.300 10.700L7.800 9M4.300 10.700V14.400" fill="none" stroke="#1c4d7a" stroke-width="1" stroke-linejoin="round"/><path d="M11.700 7.300L15.200 9V12.700L11.700 14.400L8.200 12.700V9ZM8.200 9L11.700 10.700L15.200 9M11.700 10.700V14.400" fill="none" stroke="#1c4d7a" stroke-width="1" stroke-linejoin="round"/></svg>
<div class="lbl" style="left:899.6px;top:137.9px;width:71.8px;height:16.800px"></div>
<span class="t" style="left:904.2px;top:139.80px;font-size:9.5px;line-height:13.5px;color:#1c4d7a;font-weight:700;letter-spacing:0.454px;">Components</span>
<div class="ibox" style="top:169.2px;height:32.5px"></div>
<svg style="left:992px;top:176.7px" width="16" height="16" viewBox="0 0 16 16"><path d="M8 2.500L15.500 5.500L8 8.500L.5 5.500Z" fill="none" stroke="#1c4d7a" stroke-width="1" stroke-linejoin="round"/><path d="M3.800 7V10.800C5.500 12.500 10.500 12.500 12.200 10.800V7" fill="none" stroke="#1c4d7a" stroke-width="1" stroke-linejoin="round"/><path d="M10.300 6.500V12.500" stroke="#1c4d7a" stroke-width="1"/><circle cx="10.300" cy="13.300" r="1.100" fill="#fa141c"/></svg>
<div class="lbl" style="left:911.4px;top:176.9px;width:60.0px;height:16.800px"></div>
<span class="t" style="left:916.0px;top:178.80px;font-size:9.5px;line-height:13.5px;color:#1c4d7a;font-weight:700;letter-spacing:0.646px;">Instructor</span>
<div class="ibox" style="top:208.2px;height:32.5px"></div>
<svg style="left:992px;top:215.7px" width="16" height="16" viewBox="0 0 16 16"><path d="M8 .4L14.800 4.200V11.800L8 15.600L1.200 11.800V4.200Z" fill="none" stroke="#1c4d7a" stroke-width="1" stroke-linejoin="round"/><path d="M8 2.800L12.600 5.400V10.600L8 13.200L3.400 10.600V5.400Z" fill="none" stroke="#1c4d7a" stroke-width="1" stroke-linejoin="round"/><path d="M8 5.300L10.500 6.700V9.500L8 10.900L5.500 9.500V6.700ZM5.500 6.700L8 8.100L10.500 6.700M8 8.100V10.900" fill="none" stroke="#1c4d7a" stroke-width="1" stroke-linejoin="round"/></svg>
<div class="lbl" style="left:891.4px;top:215.9px;width:80.0px;height:16.800px"></div>
<span class="t" style="left:896.0px;top:217.80px;font-size:9.5px;line-height:13.5px;color:#1c4d7a;font-weight:700;letter-spacing:0.430px;">3D Warehouse</span>
<div class="ibox" style="top:247.2px;height:32.5px"></div>
<svg style="left:992px;top:254.7px" width="16" height="16" viewBox="0 0 16 16"><path d="M8 .8L14.800 3.800V11.800L8 15.200L1.200 11.800V3.800ZM1.200 3.800L8 7L14.800 3.800M8 7V15.200" fill="none" stroke="#1c4d7a" stroke-width="1" stroke-linejoin="round"/><path d="M1.200 3.800L4.600 5.400V9.500L1.200 7.800ZM4.600 9.500L8 11.100V15.200L4.600 13.500Z" fill="#1c4d7a"/></svg>
<div class="lbl" style="left:914.9px;top:255.0px;width:56.5px;height:16.800px"></div>
<span class="t" style="left:919.5px;top:256.80px;font-size:9.5px;line-height:13.5px;color:#1c4d7a;font-weight:700;letter-spacing:0.679px;">Materials</span>
<div class="ibox" style="top:286.2px;height:32.5px"></div>
<svg style="left:992px;top:293.7px" width="16" height="16" viewBox="0 0 16 16"><path d="M1 6L5 1.500L9 4V13.800L5 15.500L1 13.500ZM5 1.500V15.500" fill="none" stroke="#1c4d7a" stroke-width="1" stroke-linejoin="round"/><path d="M5 1.500L9.500 .8L12.500 3.800" fill="none" stroke="#1c4d7a" stroke-width="1" stroke-linejoin="round"/><path d="M9.500 7.500V14C9.500 15.800 15 15.800 15 14V7.500" fill="#f1f2f7" stroke="#1c4d7a" stroke-width="1"/><ellipse cx="12.250" cy="7.500" rx="2.750" ry="1.200" fill="#f1f2f7" stroke="#1c4d7a" stroke-width="1"/></svg>
<div class="lbl" style="left:932.4px;top:294.0px;width:39.0px;height:16.800px"></div>
<span class="t" style="left:937.0px;top:295.80px;font-size:9.5px;line-height:13.5px;color:#1c4d7a;font-weight:700;letter-spacing:0.300px;">Styles</span>
<div class="ibox" style="top:325.2px;height:32.5px"></div>
<svg style="left:992px;top:332.7px" width="16" height="16" viewBox="0 0 16 16"><path d="M1.500 10.500L8.500 2.800L14.500 4.500L15 8.500L7 15.500L1.800 14Z" fill="none" stroke="#1c4d7a" stroke-width="1" stroke-linejoin="round"/><circle cx="4.200" cy="12" r=".9" fill="none" stroke="#1c4d7a" stroke-width="1" stroke-linejoin="round"/></svg>
<div class="lbl" style="left:939.7px;top:333.0px;width:31.7px;height:16.800px"></div>
<span class="t" style="left:944.3px;top:334.80px;font-size:9.5px;line-height:13.5px;color:#1c4d7a;font-weight:700;letter-spacing:0.258px;">Tags</span>
<div class="ibox" style="top:364.2px;height:32.5px"></div>
<svg style="left:992px;top:371.7px" width="16" height="16" viewBox="0 0 16 16"><path d="M2.500 3.500L10 1.500L13 9L5.500 11.500Z" fill="#f6f8fc" stroke="#1c4d7a" stroke-width="1" stroke-linejoin="round"/><path d="M5.500 11.500L13 9L15.200 12L8.500 15Z" fill="#173f66"/></svg>
<div class="lbl" style="left:918.9px;top:372.0px;width:52.5px;height:16.800px"></div>
<span class="t" style="left:923.5px;top:373.80px;font-size:9.5px;line-height:13.5px;color:#1c4d7a;font-weight:700;letter-spacing:0.228px;">Shadows</span>
<div class="ibox" style="top:403.2px;height:32.5px"></div>
<svg style="left:992px;top:410.7px" width="16" height="16" viewBox="0 0 16 16"><path d="M1.500 6.500H14.500V15H1.500Z" fill="none" stroke="#1c4d7a" stroke-width="1" stroke-linejoin="round"/><path d="M1.300 5.800L14 1.500L14.700 3.600L2 7.800Z" fill="none" stroke="#1c4d7a" stroke-width="1" stroke-linejoin="round"/><path d="M4.300 4.800L5.800 6.200M7.500 3.700L9 5.100M10.700 2.600L12.200 4" stroke="#1c4d7a" stroke-width="1"/><path d="M6.300 8.800V12.800L10 10.800Z" fill="none" stroke="#1c4d7a" stroke-width="1" stroke-linejoin="round"/></svg>
<div class="lbl" style="left:928.4px;top:411.0px;width:43.0px;height:16.800px"></div>
<span class="t" style="left:933.0px;top:412.80px;font-size:9.5px;line-height:13.5px;color:#1c4d7a;font-weight:700;letter-spacing:0.086px;">Scenes</span>
<div class="ibox" style="top:442.2px;height:32.5px"></div>
<svg style="left:992px;top:449.7px" width="16" height="16" viewBox="0 0 16 16"><circle cx="4" cy="8.500" r="3" fill="none" stroke="#1c4d7a" stroke-width="1" stroke-linejoin="round"/><circle cx="12" cy="8.500" r="3" fill="none" stroke="#1c4d7a" stroke-width="1" stroke-linejoin="round"/><path d="M7 8C7.600 7.200 8.400 7.200 9 8M1 8.500L.2 7.500M15 8.500L15.800 7.500" fill="none" stroke="#1c4d7a" stroke-width="1" stroke-linejoin="round"/></svg>
<div class="lbl" style="left:925.9px;top:450.0px;width:45.5px;height:16.800px"></div>
<span class="t" style="left:930.5px;top:451.80px;font-size:9.5px;line-height:13.5px;color:#1c4d7a;font-weight:700;letter-spacing:0.358px;">Display</span>
<div class="ibox" style="top:481.2px;height:32.5px"></div>
<svg style="left:992px;top:488.7px" width="16" height="16" viewBox="0 0 16 16"><circle cx="8" cy="8" r="7" fill="none" stroke="#1c4d7a" stroke-width="1" stroke-linejoin="round"/><path d="M8 1V15M10.300 1.500V14.500M12.500 2.800V13.200M8 4H13.700M8 6.300H14.800M8 8.600H15M8 10.900H14.300M8 13H12.500" stroke="#1c4d7a" stroke-width=".6"/></svg>
<div class="lbl" style="left:881.1px;top:489.0px;width:90.3px;height:16.800px"></div>
<span class="t" style="left:885.7px;top:490.80px;font-size:9.5px;line-height:13.5px;color:#1c4d7a;font-weight:700;letter-spacing:0.551px;">Soften / Smooth</span>
<div class="ibox" style="top:520.2px;height:25.3px"></div>
<svg style="left:992px;top:527.9px" width="16" height="16" viewBox="0 0 16 16"><circle cx="8" cy="8" r="7.300" fill="none" stroke="#1c4d7a" stroke-width="1" stroke-linejoin="round"/><path d="M8 6.800V12" stroke="#1c4d7a" stroke-width="1.500"/><circle cx="8" cy="4.600" r=".9" fill="#1c4d7a"/></svg>
<div class="lbl" style="left:908.2px;top:528.0px;width:63.2px;height:16.800px"></div>
<span class="t" style="left:912.8px;top:529.80px;font-size:9.5px;line-height:13.5px;color:#1c4d7a;font-weight:700;letter-spacing:0.650px;">Model Info</span>
<div class="lbl" style="left:857px;top:309.400px;width:17.600px;height:18.400px;border-radius:4px"></div>
<svg style="left:860.8px;top:314px" width="10" height="9" viewBox="0 0 10 9"><path d="M.8 .8L4.300 4.500L.8 8.200M5.300 .8L8.800 4.500L5.300 8.200" fill="none" stroke="#1c4d7a" stroke-width="1.500"/></svg>
<div class="abs" style="left:860.400px;top:391.400px;width:54.800px;height:18.300px;background:#fff;border:1px solid #a4a8b3;border-radius:1.5px"></div>
<span class="t" style="left:863.0px;top:393.10px;font-size:10.5px;line-height:14.5px;color:#333;font-weight:400;letter-spacing:-0.195px;">~ 260.8 cm</span>
<div class="abs" style="left:0;top:551.500px;width:1024px;height:24.500px;background:#f1f2f7"></div>
<svg style="left:6px;top:555px" width="18" height="18" viewBox="0 0 18 18"><circle cx="9" cy="9" r="8.200" fill="none" stroke="#3b3b3b" stroke-width="1"/><text x="9" y="13" font-family="Liberation Sans" font-weight="700" font-size="11" text-anchor="middle" fill="#3b3b3b">?</text></svg>
<svg style="left:33px;top:556px" width="17" height="17" viewBox="0 0 17 17"><circle cx="8.500" cy="8.500" r="7.800" fill="none" stroke="#3b3b3b" stroke-width="1"/><ellipse cx="8.500" cy="8.500" rx="3.600" ry="7.800" fill="none" stroke="#3b3b3b" stroke-width=".8"/><path d="M8.500 .7V16.300M.7 8.500H16.300M2 4.300C5.500 5.800 11.500 5.800 15 4.300M2 12.700C5.500 11.200 11.500 11.200 15 12.700" fill="none" stroke="#3b3b3b" stroke-width=".8"/></svg>
<svg style="left:59px;top:555.5px" width="20" height="19" viewBox="0 0 20 19"><path d="M4.500 11.500H2.500Q.6 11.500 .6 9.600V2.500Q.6 .600 2.500 .600H16.500Q18.400 .600 18.400 2.500V9.600Q18.400 11.500 16.500 11.500H15.500" fill="none" stroke="#3b3b3b" stroke-width="1"/><path d="M8.300 13.500V6A1.200 1.200 0 0 1 10.700 6V10.500L14.500 11.300Q16 11.700 15.800 13.200L15.200 17Q15 18.200 13.800 18.200H9.500Q8.500 18.200 8 17.400L5.500 13.800Q5.200 13 6 12.600Q6.800 12.300 7.300 12.800Z" fill="#f1f2f7" stroke="#3b3b3b" stroke-width="1" stroke-linejoin="round"/></svg>
<span class="t" style="left:86.5px;top:556.65px;font-size:11px;line-height:15px;color:#333;font-weight:400;letter-spacing:-0.024px;">Click to place guide or enter distance. | Ctrl = Toggle Create Guides. | Arrow Keys = Toggle Lock Inference Direction.</span>
<span class="t" style="left:831.5px;top:556.65px;font-size:11px;line-height:15px;color:#333;font-weight:400;letter-spacing:-0.443px;">Length</span>
<div class="abs" style="left:866.200px;top:555.400px;width:136.200px;height:16.800px;background:#fff;border:1px solid #555"></div>
<span class="t" style="left:869.0px;top:556.65px;font-size:11px;line-height:15px;color:#333;font-weight:400;letter-spacing:-0.523px;">~ 260.8 cm</span>
<svg style="left:1007.2px;top:555.8px" width="16.5" height="17" viewBox="0 0 24.200 26.800"><path d="M12.800 0L24.200 5.700V18.200L12.100 26.800L0 18.700V7.600Z" fill="#1266ab"/><g fill="none" stroke="#f1f2f7" stroke-width="1.5"><path d="M12.200 13.800V27"/><path d="M4.500 7.200C8.500 4.300 13.500 3.300 17.500 5.800C20.800 8 20.600 12.500 20.100 16C19.700 18.800 18.500 20.300 16.300 21.500"/><path d="M8.500 10.800C11.500 8.800 15 8.300 16.900 10.500C18.200 12.500 17.600 15.200 15.800 17.800"/><path d="M-.5 9.500L9.200 14.200"/><path d="M-.5 14.300L9.200 18.800"/><path d="M12.200 13.800L9 12"/></g></svg>
</div></body></html>
